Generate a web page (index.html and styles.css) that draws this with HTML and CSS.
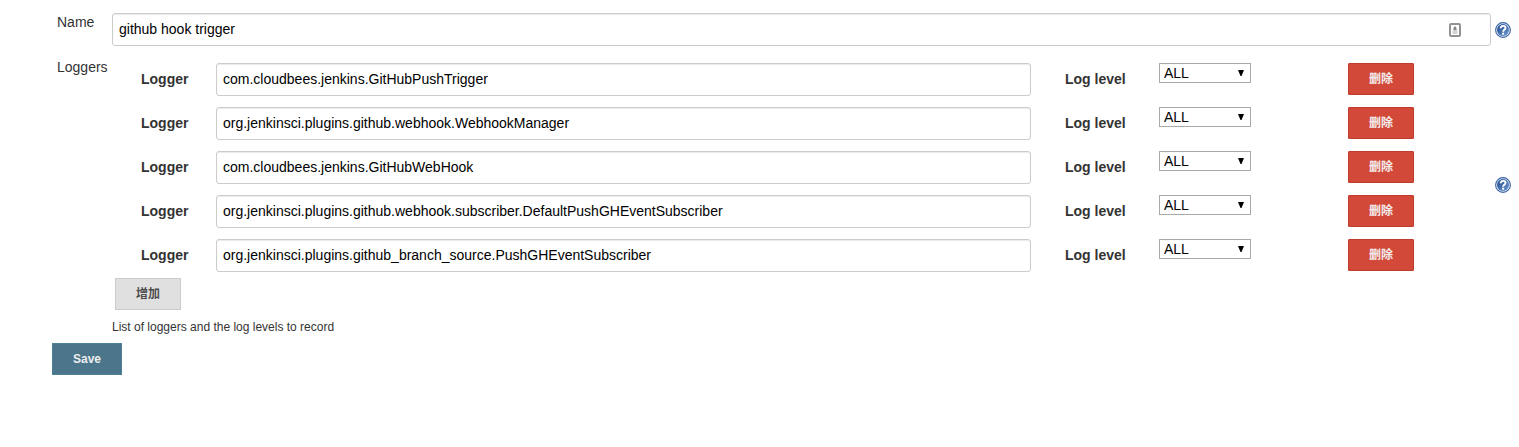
FILE: index.html
```html
<!DOCTYPE html>
<html lang="zh-CN">
<head>
<meta charset="utf-8">
<title>Log recorder</title>
<link rel="stylesheet" href="styles.css">
</head>
<body>
<svg class="defs" width="0" height="0" aria-hidden="true">
  <defs>
    <linearGradient id="ball" x1="0" y1="0" x2="1" y2="1"><stop offset="0" stop-color="#1d4688"/><stop offset="1" stop-color="#6f9cd3"/></linearGradient>
    <symbol id="help" viewBox="0 0 16 16">
      <circle cx="8" cy="8" r="7.4" fill="#e4ecf6" stroke="#3a65a3" stroke-width="1.1"/>
      <circle cx="8" cy="8" r="6" fill="url(#ball)"/>
      <path d="M5.7 6.4C5.5 3.1 10.6 3.1 10.5 6C10.4 7.8 8.1 7.7 8.1 9.7" fill="none" stroke="#fff" stroke-width="1.9"/>
      <rect x="7.1" y="10.7" width="2" height="2" fill="#fff"/>
    </symbol>
    <symbol id="arrow" viewBox="0 0 6 6"><path d="M0 0H6L3.5 6H2.5Z" fill="#000"/></symbol>
  </defs>
</svg>
<form class="config">
  <div class="entry">
    <label class="entry-label" for="name">Name</label>
    <div class="name-field">
      <input class="text" id="name" type="text" value="github hook trigger">
      <svg class="autofill" viewBox="0 0 12 14" aria-hidden="true">
        <rect x="1" y="1" width="10" height="12" rx="1" fill="#fff" stroke="#929292" stroke-width="2"/>
        <path d="M6 3L7.5 5V7H4.5V5Z" fill="#858585"/>
        <path d="M3.5 7.5H8.5V8.5H3.5ZM3.5 9.5H8.5V10.5H3.5Z" fill="#a8a8a8"/>
      </svg>
    </div>
    <a class="help" href="#" aria-label="Help for Name"><svg><use href="#help"/></svg></a>
  </div>
  <div class="entry entry-loggers">
    <span class="entry-label">Loggers</span>
    <div class="loggers">
      <div class="logger">
        <label class="caption" for="logger1">Logger</label>
        <input class="text" id="logger1" type="text" value="com.cloudbees.jenkins.GitHubPushTrigger">
        <label class="caption level-caption" for="level1">Log level</label>
        <div class="level"><select id="level1"><option>ALL</option></select><svg class="arrow"><use href="#arrow"/></svg></div>
        <button class="btn danger" type="button">删除</button>
      </div>
      <div class="logger">
        <label class="caption" for="logger2">Logger</label>
        <input class="text" id="logger2" type="text" value="org.jenkinsci.plugins.github.webhook.WebhookManager">
        <label class="caption level-caption" for="level2">Log level</label>
        <div class="level"><select id="level2"><option>ALL</option></select><svg class="arrow"><use href="#arrow"/></svg></div>
        <button class="btn danger" type="button">删除</button>
      </div>
      <div class="logger">
        <label class="caption" for="logger3">Logger</label>
        <input class="text" id="logger3" type="text" value="com.cloudbees.jenkins.GitHubWebHook">
        <label class="caption level-caption" for="level3">Log level</label>
        <div class="level"><select id="level3"><option>ALL</option></select><svg class="arrow"><use href="#arrow"/></svg></div>
        <button class="btn danger" type="button">删除</button>
      </div>
      <div class="logger">
        <label class="caption" for="logger4">Logger</label>
        <input class="text" id="logger4" type="text" value="org.jenkinsci.plugins.github.webhook.subscriber.DefaultPushGHEventSubscriber">
        <label class="caption level-caption" for="level4">Log level</label>
        <div class="level"><select id="level4"><option>ALL</option></select><svg class="arrow"><use href="#arrow"/></svg></div>
        <button class="btn danger" type="button">删除</button>
      </div>
      <div class="logger">
        <label class="caption" for="logger5">Logger</label>
        <input class="text" id="logger5" type="text" value="org.jenkinsci.plugins.github_branch_source.PushGHEventSubscriber">
        <label class="caption level-caption" for="level5">Log level</label>
        <div class="level"><select id="level5"><option>ALL</option></select><svg class="arrow"><use href="#arrow"/></svg></div>
        <button class="btn danger" type="button">删除</button>
      </div>
      <button class="btn add" type="button">增加</button>
    </div>
    <a class="help help-middle" href="#" aria-label="Help for Loggers"><svg><use href="#help"/></svg></a>
  </div>
  <p class="description">List of loggers and the log levels to record</p>
  <button class="btn save" type="submit">Save</button>
</form>
</body>
</html>
```

FILE: styles.css
```css
* { box-sizing: border-box; }

body {
  margin: 0;
  background: #fff;
  color: #333;
  font: 14px/18px "Liberation Sans", Arial, "Noto Sans CJK SC", sans-serif;
}

.defs { position: absolute; }

.config { padding: 13px 8px 20px 52px; }

.entry {
  display: grid;
  grid-template-columns: 60px 1fr 20px;
}

.entry-loggers { margin-top: 17px; }

.entry-label { padding-left: 5px; justify-self: start; align-self: start; }
.entry-loggers .entry-label { margin-top: -5px; }

.name-field { position: relative; }

.text {
  display: block;
  width: 100%;
  min-width: 0;
  height: 33px;
  margin: 0;
  padding: 0 6px 2px;
  border: 1px solid #ccc;
  border-radius: 3px;
  background: #fff;
  box-shadow: inset 0 1px 1px rgba(0, 0, 0, .08);
  color: #000;
  font: inherit;
}

.autofill {
  position: absolute;
  top: 10px;
  right: 30px;
  width: 12px;
  height: 14px;
}

.help {
  align-self: center;
  justify-self: end;
  height: 16px;
}
.help svg { display: block; width: 16px; height: 16px; }

.logger {
  display: grid;
  grid-template-columns: 75px 1fr 128px 189px 66px;
  margin: 0 77px 11px 29px;
}

.caption { align-self: center; padding-bottom: 2px; font-weight: bold; }
.level-caption { padding-left: 34px; }

.level { position: relative; width: 92px; height: 20px; }

.level select {
  display: block;
  width: 100%;
  height: 20px;
  margin: 0;
  padding: 0 16px 0 4px;
  appearance: none;
  border: 1px solid #a9a9a9;
  border-radius: 0;
  background: #fff;
  color: #000;
  font: inherit;
}

.arrow {
  position: absolute;
  top: 7px;
  right: 7px;
  width: 6px;
  height: 6px;
  pointer-events: none;
}

.btn {
  display: block;
  width: 66px;
  height: 32px;
  margin: 0;
  padding: 0;
  border: 1px solid;
  border-radius: 0;
  font: bold 12px/30px "Liberation Sans", Arial, "Noto Sans CJK SC", sans-serif;
}

.danger { border-color: #c03d2e; border-radius: 1px; background: #d24939; color: #f4eeee; }
.add { margin: -5px 0 0 3px; border-color: #ccc; background: #e0e0e0; color: #4d4d4d; }
.save { width: 70px; border-color: #4d8199; background: #4b758b; color: #eee; }

.description {
  margin: 8px 0 7px 60px;
  font-size: 12px;
  line-height: 18px;
}

.entry-loggers .help-middle { margin-bottom: 4px; }
```
